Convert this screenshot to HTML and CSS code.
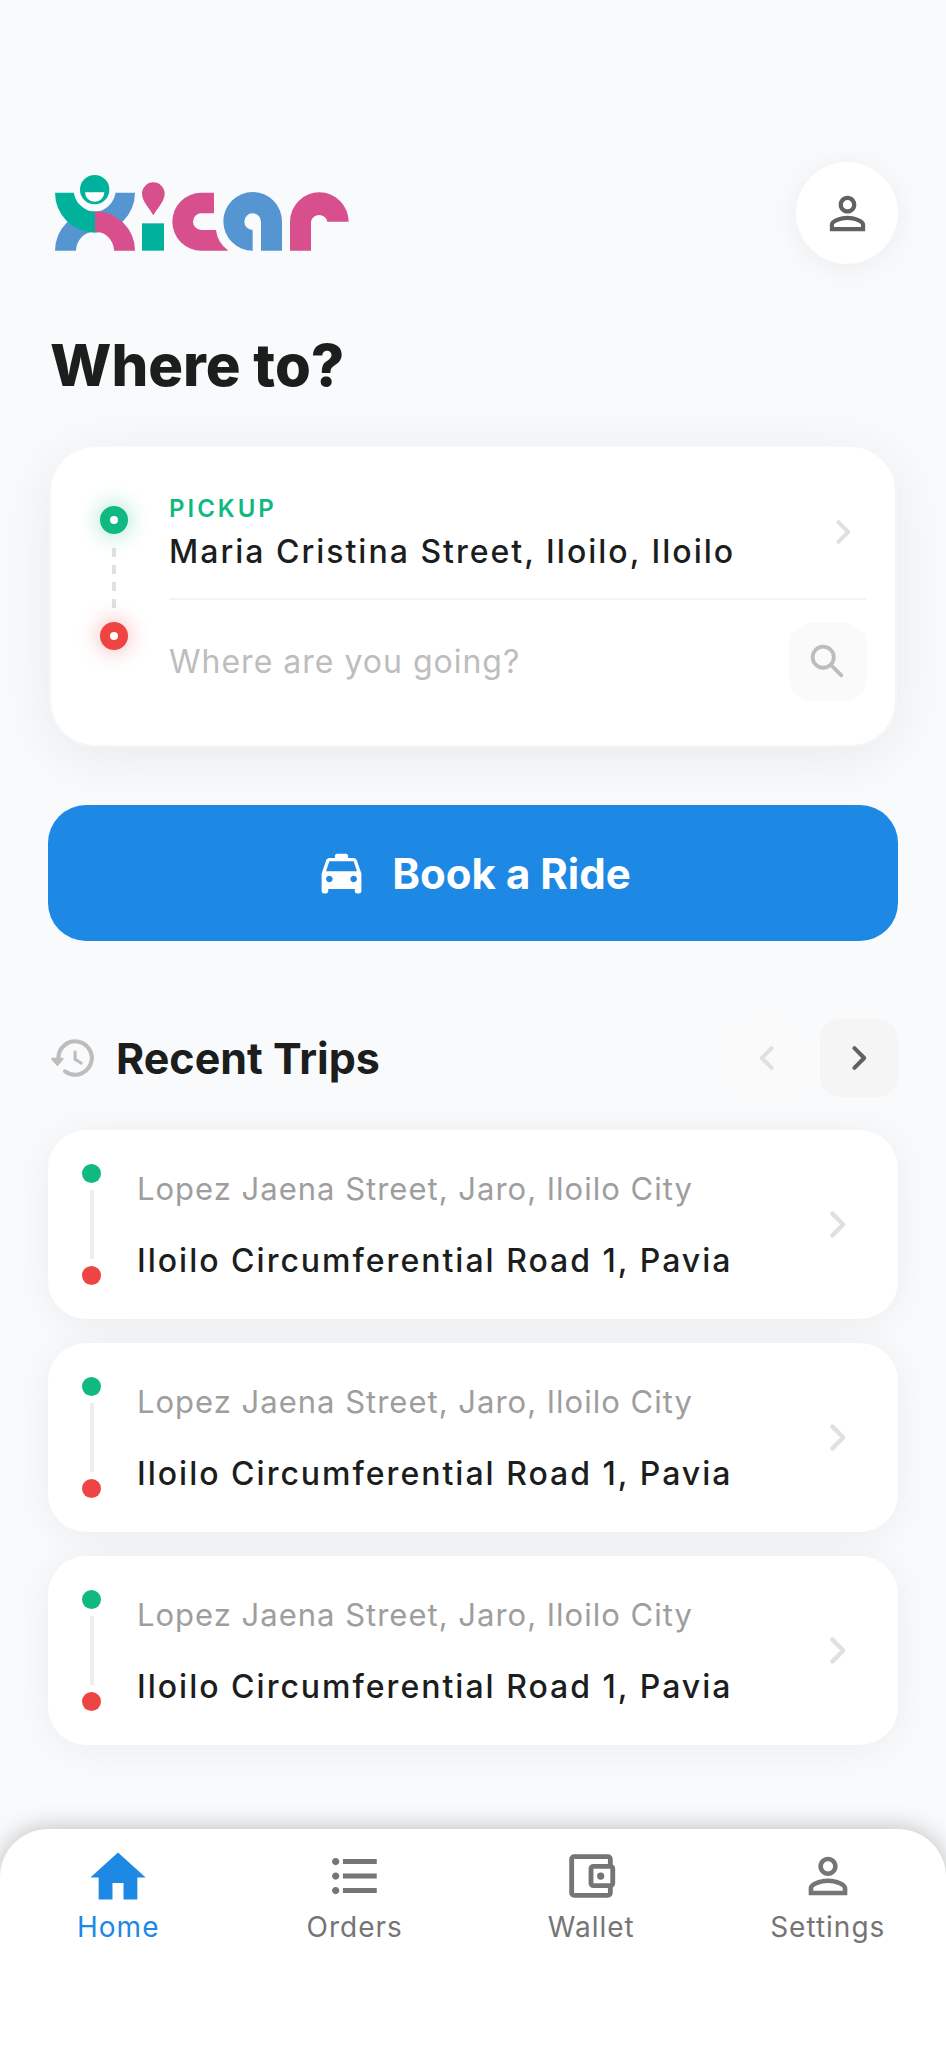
FILE: index.html
```html
<!DOCTYPE html>
<html lang="en">

<head>
    <meta charset="UTF-8">
    <meta name="viewport" content="width=device-width, initial-scale=1.0">
    <title>Xicar</title>
    <link rel="stylesheet" href="styles.css">
</head>

<body>
    <!-- icons shared by several parts of the page -->
    <svg class="sprite" aria-hidden="true">
        <symbol id="chevron" viewBox="0 0 24 24">
            <path d="M9.7 7.1L14.6 12l-4.9 4.9" fill="none" stroke="currentColor" stroke-width="2" stroke-linecap="round" stroke-linejoin="round" />
        </symbol>
        <symbol id="person" viewBox="0 0 24 24">
            <path fill="currentColor" d="M12 5.9a2.1 2.1 0 1 1 0 4.2 2.1 2.1 0 0 1 0-4.2m0 9c2.97 0 6.1 1.46 6.1 2.1v1.1H5.9V17c0-.64 3.13-2.1 6.1-2.1M12 4C9.79 4 8 5.79 8 8s1.79 4 4 4 4-1.79 4-4-1.79-4-4-4zm0 9c-2.67 0-8 1.34-8 4v3h16v-3c0-2.66-5.33-4-8-4z" />
        </symbol>
    </svg>

    <main>
        <header>
            <svg class="logo" viewBox="42 42 888 234" role="img" aria-label="Xicar">
                <g fill="#5596d2">
                    <path d="M285 98A120 120 0 0 1 165 218V155A57 57 0 0 0 222 98Z" />
                    <path d="M45 272A120 118 0 0 1 165 154V215A57 57 0 0 0 108 272Z" />
                </g>
                <path fill="#00b29c" d="M45 98A120 120 0 0 0 165 218V155A57 57 0 0 1 108 98Z" />
                <path fill="#d74f8c" d="M285 272A120 118 0 0 0 165 154V215A57 57 0 0 1 222 272Z" />
                <circle cx="164" cy="90" r="63" fill="#f9fafc" />
                <circle cx="164" cy="89" r="44" fill="#00b29c" />
                <path fill="#fff" d="M135 97H193A29 28 0 0 1 135 97Z" />
                <path fill="#d74f8c" d="M340 166C330 146 306 124 306 101A34 34 0 0 1 374 101C374 124 350 146 340 166Z" />
                <path fill="#00b29c" d="M306 190H372V272H306Z" />
                <path fill="#d74f8c" d="M522 98H484A87 87 0 0 0 484 272H565Q532 248 528 210H484A25 25 0 0 1 484 160H522Z" />
                <path fill="#5596d2" d="M726 272V185A88 88 0 1 0 638 272V210A25 25 0 1 1 663 185V272Z" />
                <path fill="#d74f8c" d="M750 272V185A88 88 0 0 1 926 185H862A25 25 0 0 0 813 185V272Z" />
            </svg>
            <button type="button" class="profile-button" aria-label="Profile">
                <svg><use href="#person" /></svg>
            </button>
        </header>

        <h1>Where to?</h1>

        <form class="ride-form" id="rideForm">
            <div class="route">
                <div class="route-line">
                    <span class="stop pickup"></span>
                    <span class="dashes"><i></i><i></i><i></i><i></i></span>
                    <span class="stop dropoff"></span>
                </div>
                <div class="route-fields">
                    <a href="#pickup" class="pickup-row">
                        <span class="pickup-text">
                            <span class="label">PICKUP</span>
                            <span class="address">Maria Cristina Street, Iloilo, Iloilo</span>
                        </span>
                        <svg class="chevron"><use href="#chevron" /></svg>
                    </a>
                    <div class="destination-row">
                        <input type="text" id="destination" placeholder="Where are you going?" aria-label="Destination">
                        <button type="button" class="search-button" aria-label="Search">
                            <svg viewBox="0 0 24 24" fill="none" stroke="currentColor" stroke-width="2">
                                <circle cx="9.5" cy="9.5" r="5.5" />
                                <path d="M14 14l5 5" stroke-linecap="round" />
                            </svg>
                        </button>
                    </div>
                </div>
            </div>
            <button type="submit" class="book-button">
                <svg viewBox="0 0 24 24" fill="currentColor">
                    <path d="M18.92 6.01C18.72 5.42 18.16 5 17.5 5H15V4c0-.55-.45-1-1-1h-4c-.55 0-1 .45-1 1v1H6.5c-.66 0-1.21.42-1.42 1.01L3 12v8c0 .55.45 1 1 1h1c.55 0 1-.45 1-1v-1h12v1c0 .55.45 1 1 1h1c.55 0 1-.45 1-1v-8l-2.08-5.99zM6.5 16c-.83 0-1.5-.67-1.5-1.5S5.67 13 6.5 13s1.5.67 1.5 1.5S7.33 16 6.5 16zm11 0c-.83 0-1.5-.67-1.5-1.5s.67-1.5 1.5-1.5 1.5.67 1.5 1.5-.67 1.5-1.5 1.5zM5 11l1.5-4.5h11L19 11H5z" />
                </svg>
                Book a Ride
            </button>
        </form>

        <section>
            <div class="trips-header">
                <svg class="history" viewBox="0 0 24 24" fill="none" stroke="currentColor" stroke-width="2" stroke-linecap="round">
                    <path d="M5 12a8 8 0 1 1 3.2 6.4" />
                    <path d="M2 12.4h5L4.5 15.300z" fill="currentColor" stroke-width="1" stroke-linejoin="round" />
                    <path d="M13 9v3.700l2.900 1.700" stroke-width="1.500" />
                </svg>
                <h2>Recent Trips</h2>
                <button type="button" class="page-button" aria-label="Previous trips" disabled>
                    <svg class="previous"><use href="#chevron" /></svg>
                </button>
                <button type="button" class="page-button" aria-label="Next trips">
                    <svg><use href="#chevron" /></svg>
                </button>
            </div>

            <div class="trips">
                <a href="#trip-1" class="trip">
                    <span class="trip-line"><i class="dot start"></i><i class="line"></i><i class="dot end"></i></span>
                    <span class="trip-text">
                        <span class="from">Lopez Jaena Street, Jaro, Iloilo City</span>
                        <span class="to">Iloilo Circumferential Road 1, Pavia</span>
                    </span>
                    <svg class="chevron"><use href="#chevron" /></svg>
                </a>
                <a href="#trip-2" class="trip">
                    <span class="trip-line"><i class="dot start"></i><i class="line"></i><i class="dot end"></i></span>
                    <span class="trip-text">
                        <span class="from">Lopez Jaena Street, Jaro, Iloilo City</span>
                        <span class="to">Iloilo Circumferential Road 1, Pavia</span>
                    </span>
                    <svg class="chevron"><use href="#chevron" /></svg>
                </a>
                <a href="#trip-3" class="trip">
                    <span class="trip-line"><i class="dot start"></i><i class="line"></i><i class="dot end"></i></span>
                    <span class="trip-text">
                        <span class="from">Lopez Jaena Street, Jaro, Iloilo City</span>
                        <span class="to">Iloilo Circumferential Road 1, Pavia</span>
                    </span>
                    <svg class="chevron"><use href="#chevron" /></svg>
                </a>
            </div>
        </section>
    </main>

    <nav>
        <a href="#home" class="active">
            <svg viewBox="1.5 1 21 21" fill="currentColor"><path d="M10 20v-6h4v6h5v-8h3L12 3 2 12h3v8z" /></svg>
            Home
        </a>
        <a href="#orders">
            <svg viewBox="0 0 24 24" fill="currentColor"><path d="M4 10.500c-.83 0-1.500.67-1.500 1.500s.67 1.500 1.500 1.500 1.500-.67 1.500-1.500-.67-1.500-1.500-1.500zm0-6c-.83 0-1.500.67-1.500 1.500S3.170 7.500 4 7.500 5.500 6.830 5.500 6 4.830 4.500 4 4.500zm0 12c-.83 0-1.500.68-1.500 1.500s.68 1.500 1.500 1.500 1.500-.68 1.500-1.500-.67-1.500-1.500-1.500zM7 19h14v-2H7v2zm0-6h14v-2H7v2zm0-8v2h14V5H7z" /></svg>
            Orders
        </a>
        <a href="#wallet">
            <svg viewBox="0 0 24 24" fill="none" stroke="currentColor" stroke-width="2" stroke-linejoin="round">
                <path d="M20 7.500V5a1 1 0 0 0-1-1H5a1 1 0 0 0-1 1v14a1 1 0 0 0 1 1h14a1 1 0 0 0 1-1v-2.500" />
                <rect x="12" y="8" width="9" height="8" rx="1" />
                <circle cx="16" cy="12" r="1.500" fill="currentColor" stroke="none" />
            </svg>
            Wallet
        </a>
        <a href="#settings">
            <svg><use href="#person" /></svg>
            Settings
        </a>
    </nav>

    <script>
        const form = document.getElementById('rideForm');

        form.addEventListener('submit', function (event) {
            event.preventDefault();
            document.getElementById('destination').focus();
        });
    </script>
</body>

</html>
```
FILE: styles.css
```css
* {
    box-sizing: border-box;
}

body {
    font-family: Inter, "Liberation Sans", sans-serif;
    background-color: #f9fafc;
    color: #1c1d1d;
    margin: 0;
    min-height: 100vh;
    display: flex;
    flex-direction: column;
}

a {
    color: inherit;
    text-decoration: none;
}

button {
    font-family: inherit;
    border: none;
    padding: 0;
    display: flex;
    justify-content: center;
    align-items: center;
    cursor: pointer;
}

.sprite {
    display: none;
}

main {
    padding: 162px 48px 80px;
}

header {
    display: flex;
    justify-content: space-between;
    align-items: center;
    padding-left: 6px;
}

.logo {
    width: 296px;
    height: 78px;
}

.profile-button {
    width: 102px;
    height: 102px;
    border-radius: 50%;
    background-color: #fff;
    color: #616161;
    box-shadow: 0 4px 32px rgba(0, 0, 0, 0.06);
}

.profile-button svg {
    width: 53px;
    height: 53px;
}

h1 {
    font-size: 58px;
    line-height: 68px;
    font-weight: 800;
    margin: 67px 0 46px;
    padding-left: 2px;
}

.route {
    display: flex;
    background-color: #fff;
    border: 2px solid #f5f6f7;
    border-radius: 46px;
    padding: 34px 28px 44px 47px;
    margin: 0 1px;
    box-shadow: 0 10px 60px rgba(0, 0, 0, 0.07);
}

.route-line {
    display: flex;
    flex-direction: column;
    align-items: center;
    width: 32px;
    padding-top: 25px;
    margin-right: 39px;
}

.stop {
    width: 28px;
    height: 28px;
    border-radius: 50%;
    border: 10px solid;
    background-color: #fff;
}

.stop.pickup {
    border-color: #10b981;
    box-shadow: 0 0 20px 3px rgba(16, 185, 129, 0.3);
}

.stop.dropoff {
    border-color: #ef4444;
    box-shadow: 0 0 20px 3px rgba(239, 68, 68, 0.3);
}

.dashes {
    display: flex;
    flex-direction: column;
    gap: 8px;
    padding: 14px 0;
}

.dashes i {
    width: 4px;
    height: 9px;
    background-color: #e0e0e0;
}

.route-fields {
    flex: 1;
    min-width: 0;
}

.pickup-row {
    display: flex;
    justify-content: space-between;
    align-items: center;
    height: 119px;
    padding-bottom: 15px;
    border-bottom: 2px solid #f3f3f4;
}

.pickup-text {
    display: flex;
    flex-direction: column;
    padding-top: 4px;
}

.label {
    font-size: 24px;
    line-height: 36px;
    font-weight: 600;
    letter-spacing: 3px;
    color: #10b981;
}

.address {
    font-size: 32px;
    line-height: 50px;
    font-weight: 500;
    letter-spacing: 2px;
}

.chevron {
    width: 53px;
    height: 53px;
    color: #e0e0e0;
}

.pickup-row .chevron {
    width: 48px;
    height: 48px;
}

.destination-row {
    display: flex;
    align-items: center;
    padding-top: 23px;
}

.destination-row input {
    flex: 1;
    min-width: 0;
    border: none;
    outline: none;
    padding: 0;
    background: none;
    font-family: inherit;
    font-size: 32px;
    line-height: 48px;
    letter-spacing: 1px;
}

.destination-row input::placeholder {
    color: #bdbdbd;
}

.search-button {
    width: 78px;
    height: 78px;
    border-radius: 24px;
    background-color: #fafafa;
    color: #bdbdbd;
}

.search-button svg {
    width: 46px;
    height: 46px;
}

.book-button {
    width: 100%;
    height: 136px;
    margin-top: 58px;
    gap: 24px;
    border-radius: 38px;
    background-color: #1e88e5;
    color: #fff;
    font-size: 42px;
    font-weight: 700;
}

.book-button svg {
    width: 53px;
    height: 53px;
}

.trips-header {
    display: flex;
    align-items: center;
    margin-top: 78px;
    gap: 14px;
}

.history {
    width: 50px;
    height: 50px;
    color: #bdbdbd;
}

h2 {
    flex: 1;
    margin: 0;
    padding-left: 4px;
    font-size: 43px;
    line-height: 48px;
    font-weight: 700;
}

.page-button {
    width: 78px;
    height: 78px;
    border-radius: 20px;
    background-color: #f5f5f5;
    color: #616161;
}

.page-button:disabled {
    background-color: #fafafa;
    color: #e0e0e0;
    cursor: default;
}

.page-button svg {
    width: 48px;
    height: 48px;
}

.page-button .previous {
    transform: rotate(180deg);
}

.trips {
    display: flex;
    flex-direction: column;
    gap: 24px;
    margin-top: 33px;
}

.trip {
    display: flex;
    align-items: center;
    height: 189px;
    padding: 0 34px;
    background-color: #fff;
    border-radius: 38px;
    box-shadow: 0 4px 40px rgba(0, 0, 0, 0.06);
}

.trip-line {
    display: flex;
    flex-direction: column;
    align-items: center;
    gap: 7px;
    margin-right: 36px;
}

.dot {
    width: 19px;
    height: 19px;
    border-radius: 50%;
}

.dot.start {
    background-color: #10b981;
}

.dot.end {
    background-color: #ef4444;
}

.line {
    width: 4px;
    height: 69px;
    background-color: #eee;
}

.trip-text {
    flex: 1;
    display: flex;
    flex-direction: column;
    gap: 24px;
}

.from,
.to {
    line-height: 48px;
}

.from {
    font-size: 31px;
    letter-spacing: 1px;
    color: #9e9e9e;
}

.to {
    font-size: 32px;
    font-weight: 500;
    letter-spacing: 2px;
}

nav {
    display: grid;
    grid-template-columns: repeat(4, 1fr);
    margin-top: auto;
    min-height: 218px;
    padding-top: 18px;
    background-color: #fff;
    border-radius: 48px 48px 0 0;
    box-shadow: 0 0 26px rgba(0, 0, 0, 0.25);
}

nav a {
    display: flex;
    flex-direction: column;
    align-items: center;
    font-size: 28px;
    line-height: 40px;
    letter-spacing: 1px;
    gap: 2px;
    color: #757575;
}

nav svg {
    width: 58px;
    height: 58px;
}

nav a.active {
    color: #1e88e5;
}
```
